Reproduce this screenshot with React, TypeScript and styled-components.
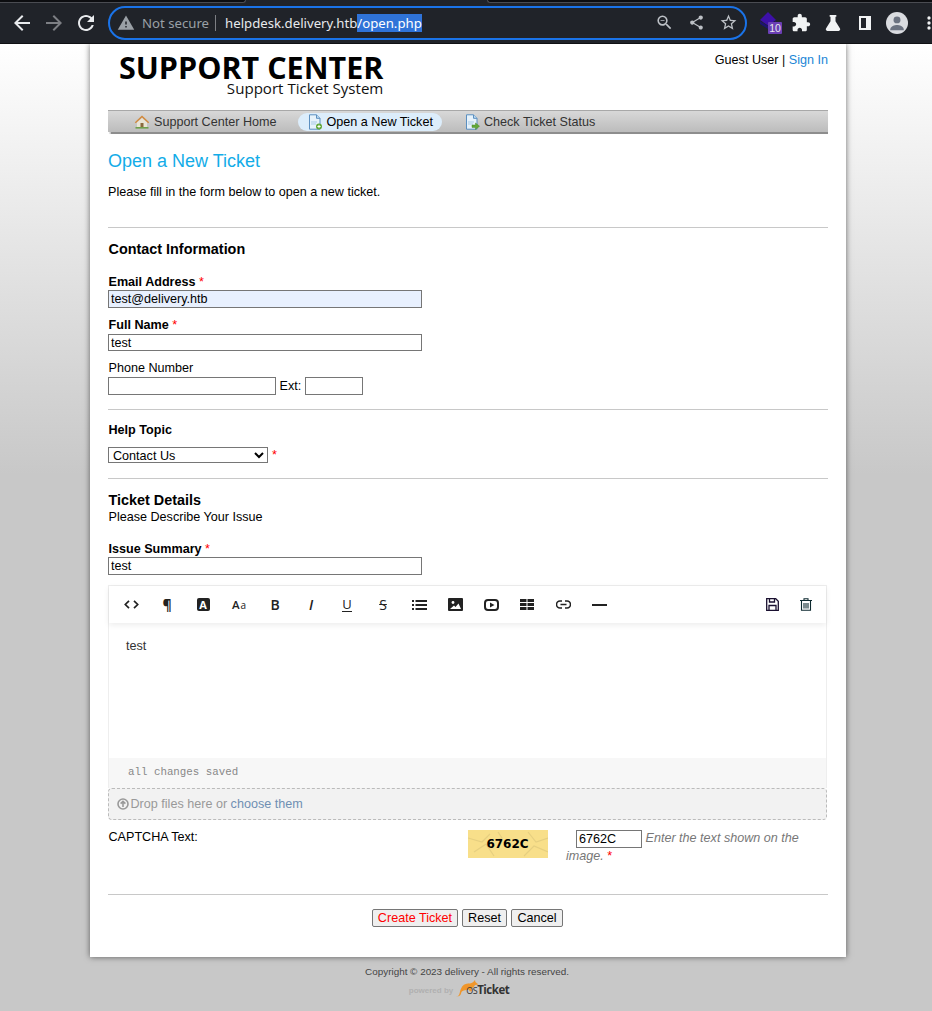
import React from 'react';
import styled, { createGlobalStyle } from 'styled-components';

const GlobalStyle = createGlobalStyle`
    html, body {
        margin: 0;
        padding: 0;
        height: 100%;
        overflow: hidden;
        background: #c8c8c8;
    }
    body {
        font-family: "Liberation Sans", Arial, sans-serif;
        font-size: 12.6px;
        color: #000;
    }
`;

const ChromeIcon = ({ d, size = 24, color = '#e8eaed' }: { d: string; size?: number; color?: string }) => (
    <svg width={size} height={size} viewBox="0 0 24 24" fill={color}>
        <path d={d} />
    </svg>
);

const paths = {
    back: 'M20 11H7.83l5.59-5.59L12 4l-8 8 8 8 1.41-1.41L7.83 13H20v-2z',
    forward: 'M12 4l-1.41 1.41L16.17 11H4v2h12.17l-5.58 5.59L12 20l8-8z',
    reload: 'M17.65 6.35C16.2 4.9 14.21 4 12 4c-4.42 0-7.99 3.58-7.99 8s3.57 8 7.99 8c3.73 0 6.84-2.55 7.73-6h-2.08c-.82 2.33-3.04 4-5.65 4-3.31 0-6-2.69-6-6s2.69-6 6-6c1.66 0 3.14.69 4.22 1.78L13 11h7V4l-2.35 2.35z',
    warning: 'M1 21h22L12 2 1 21zm12-3h-2v-2h2v2zm0-4h-2v-4h2v4z',
    zoomOut: 'M15.5 14h-.79l-.28-.27A6.47 6.47 0 0 0 16 9.5 6.5 6.5 0 1 0 9.5 16c1.61 0 3.09-.59 4.23-1.57l.27.28v.79l5 4.99L20.49 19l-4.99-5zm-6 0C7.01 14 5 11.99 5 9.5S7.01 5 9.5 5 14 7.01 14 9.5 11.99 14 9.5 14zM7 9h5v1H7z',
    share: 'M18 16.08c-.76 0-1.44.3-1.96.77L8.91 12.7c.05-.23.09-.46.09-.7s-.04-.47-.09-.7l7.05-4.11c.54.5 1.25.81 2.04.81 1.66 0 3-1.34 3-3s-1.34-3-3-3-3 1.34-3 3c0 .24.04.47.09.7L8.04 9.81C7.5 9.31 6.79 9 6 9c-1.66 0-3 1.34-3 3s1.34 3 3 3c.79 0 1.5-.31 2.04-.81l7.12 4.16c-.05.21-.08.43-.08.65 0 1.61 1.31 2.92 2.92 2.92 1.61 0 2.92-1.31 2.92-2.92s-1.31-2.92-2.92-2.92z',
    star: 'M22 9.24l-7.19-.62L12 2 9.19 8.63 2 9.24l5.46 4.73L5.82 21 12 17.27 18.18 21l-1.63-7.03L22 9.24zM12 15.4l-3.76 2.27 1-4.28-3.32-2.88 4.38-.38L12 6.1l1.71 4.04 4.38.38-3.32 2.88 1 4.28L12 15.4z',
    puzzle: 'M20.5 11H19V7c0-1.1-.9-2-2-2h-4V3.5C13 2.12 11.88 1 10.5 1S8 2.12 8 3.5V5H4c-1.1 0-1.99.9-1.99 2v3.8H3.5c1.49 0 2.7 1.21 2.7 2.7s-1.21 2.7-2.7 2.7H2V20c0 1.1.9 2 2 2h3.8v-1.5c0-1.49 1.21-2.7 2.7-2.7 1.49 0 2.7 1.21 2.7 2.7V22H17c1.1 0 2-.9 2-2v-4h1.5c1.38 0 2.5-1.12 2.5-2.5S21.88 11 20.5 11z',
    flask: 'M8 2.500h8v2h-1v5.300l5.400 8.900c.7 1.200-.1 2.800-1.500 2.800H5.100c-1.400 0-2.200-1.600-1.500-2.800L9 9.800V4.500H8z',
    more: 'M12 8a2 2 0 1 0 0-4 2 2 0 0 0 0 4zm0 2a2 2 0 1 0 0 4 2 2 0 0 0 0-4zm0 6a2 2 0 1 0 0 4 2 2 0 0 0 0-4z',
};

const HomeIcon = () => (
    <svg width="16" height="16" viewBox="0 0 16 16">
        <path d="M8 1.5 .8 8.2l1 1L8 3.6l6.2 5.6 1-1z" fill="#d2893c" />
        <path d="M3 8.6 8 4.2l5 4.4V13H3z" fill="#e9e4d4" />
        <rect x="6.5" y="9" width="3" height="4" fill="#8a6a3c" />
        <path d="M1.5 13h13v1.6h-13z" fill="#6ea04a" />
    </svg>
);

const DocIcon = ({ arrow }: { arrow?: boolean }) => (
    <svg width="16" height="16" viewBox="0 0 16 16">
        <path d="M2.5 .8h7l3.5 3.5v10.9h-10.5z" fill="#e6f2fb" stroke="#5b8fc0" />
        <path d="M9.5 .8v3.5h3.5" fill="#bcd9f0" stroke="#5b8fc0" />
        <path d="M4 8h6M4 10h5" stroke="#a9cbe6" />
        {arrow ? (
            <path d="M8 11h3.5V9l4 3.2-4 3.2v-2H8z" fill="#62a838" stroke="#4a8a28" strokeWidth=".5" />
        ) : (
            <>
                <circle cx="12" cy="12.5" r="3" fill="#62a838" />
                <path d="M10.4 12.5h3.2M12 10.9v3.2" stroke="#fff" />
            </>
        )}
    </svg>
);

export default function App() {
    return (
        <>
            <GlobalStyle />
            <BrowserBar>
                <TabStrip>
                    <TabEdgeLeft />
                    <TabEdgeRight />
                </TabStrip>
                <BarRow>
                    <NavButtons>
                        <ChromeButton><ChromeIcon d={paths.back} /></ChromeButton>
                        <ChromeButton><ChromeIcon d={paths.forward} color="#7d7f84" /></ChromeButton>
                        <ChromeButton><ChromeIcon d={paths.reload} /></ChromeButton>
                    </NavButtons>
                    <Omnibox>
                        <ChromeIcon d={paths.warning} size={18} color="#9aa0a6" />
                        <NotSecure>Not secure</NotSecure>
                        <UrlDivider />
                        <Url>helpdesk.delivery.htb<Selected>/open.php</Selected></Url>
                        <OmniActions>
                            <ActionSlot><ChromeIcon d={paths.zoomOut} size={19} color="#bdc1c6" /></ActionSlot>
                            <ActionSlot><ChromeIcon d={paths.share} size={17} color="#bdc1c6" /></ActionSlot>
                            <ActionSlot><ChromeIcon d={paths.star} size={19} color="#bdc1c6" /></ActionSlot>
                        </OmniActions>
                    </Omnibox>
                    <Extensions>
                        <ActionSlot>
                            <ExtensionIcon>
                                <svg width="17" height="17" viewBox="0 0 17 17">
                                    <path d="M0 9l8 5 8-5v3l-8 5-8-5z" fill="#1d1470" />
                                    <path d="M8 0l8 8-8 5.500L0 8z" fill="#3d10a8" />
                                </svg>
                                <Badge>10</Badge>
                            </ExtensionIcon>
                        </ActionSlot>
                        <ActionSlot><ChromeIcon d={paths.puzzle} size={20} color="#f1f3f4" /></ActionSlot>
                        <ActionSlot><ChromeIcon d={paths.flask} size={20} color="#f1f3f4" /></ActionSlot>
                        <ActionSlot><SidePanel /></ActionSlot>
                        <ActionSlot>
                            <Avatar>
                                <svg width="22" height="22" viewBox="0 0 24 24" fill="#6b7280">
                                    <circle cx="12" cy="8.6" r="3.8" />
                                    <path d="M4.6 19.2c0-3.6 4.9-5 7.4-5s7.4 1.4 7.4 5v.8H4.6z" />
                                </svg>
                            </Avatar>
                        </ActionSlot>
                        <ActionSlot><ChromeIcon d={paths.more} size={20} color="#f1f3f4" /></ActionSlot>
                    </Extensions>
                </BarRow>
            </BrowserBar>

            <Page>
                <Card>
                    <Header>
                        <Logo>
                            <LogoTitle>SUPPORT CENTER</LogoTitle>
                            <LogoSub>Support Ticket System</LogoSub>
                        </Logo>
                        <UserInfo>Guest User | <Link>Sign In</Link></UserInfo>
                    </Header>

                    <Nav>
                        <NavItem $left={26}><HomeIcon />Support Center Home</NavItem>
                        <NavItem $left={21} $active><DocIcon />Open a New Ticket</NavItem>
                        <NavItem $left={22}><DocIcon arrow />Check Ticket Status</NavItem>
                    </Nav>

                    <Title>Open a New Ticket</Title>
                    <Intro>Please fill in the form below to open a new ticket.</Intro>

                    <Divider $top={27} />
                    <SectionTitle>Contact Information</SectionTitle>

                    <FieldLabel $top={17} $bold>Email Address <Req>*</Req></FieldLabel>
                    <TextInput $width={314} $autofill readOnly value="test@delivery.htb" />
                    <FieldLabel $top={9} $bold>Full Name <Req>*</Req></FieldLabel>
                    <TextInput $width={314} $top={1} $height={17} readOnly value="test" />
                    <FieldLabel $top={9}>Phone Number</FieldLabel>
                    <PhoneRow>
                        <TextInput $width={168} readOnly value="" />
                        Ext:
                        <TextInput $width={58} readOnly value="" />
                    </PhoneRow>

                    <Divider $top={14} />
                    <FieldLabel $top={12} $bold>Help Topic</FieldLabel>
                    <TopicRow>
                        <TopicSelect defaultValue="Contact Us">
                            <option>Contact Us</option>
                        </TopicSelect>
                        <Req>*</Req>
                    </TopicRow>

                    <Divider $top={15} />
                    <SectionTitle>Ticket Details</SectionTitle>
                    <FieldLabel $top={1}>Please Describe Your Issue</FieldLabel>
                    <FieldLabel $top={16} $bold>Issue Summary <Req>*</Req></FieldLabel>
                    <TextInput $width={314} readOnly value="test" />

                    <Editor>
                        <EditorToolbar>
                            <ToolGroup>
                                <Tool>
                                    <svg width="15" height="9" viewBox="0 0 15 9" fill="none" stroke="#222" strokeWidth="1.700">
                                        <path d="M5 .8 1.300 4.500 5 8.200M10 .8l3.700 3.700L10 8.200" />
                                    </svg>
                                </Tool>
                                <Tool><Glyph $size={14}>¶</Glyph></Tool>
                                <Tool><LetterBox>A</LetterBox></Tool>
                                <Tool><SizeGlyph>A<small>a</small></SizeGlyph></Tool>
                                <Tool><Glyph $size={14} $weight={600}>B</Glyph></Tool>
                                <Tool><Glyph $size={14} $italic $weight={600}>I</Glyph></Tool>
                                <Tool><UnderGlyph>U</UnderGlyph></Tool>
                                <Tool><StrikeGlyph>S</StrikeGlyph></Tool>
                                <Tool>
                                    <svg width="15" height="10" viewBox="0 0 15 10" fill="#222">
                                        <path d="M0 0h2v2H0zM3.500 0H15v2H3.500zM0 4h2v2H0zM3.500 4H15v2H3.500zM0 8h2v2H0zM3.500 8H15v2H3.500z" />
                                    </svg>
                                </Tool>
                                <Tool>
                                    <svg width="15" height="13" viewBox="0 0 15 13">
                                        <rect width="15" height="13" rx="1" fill="#222" />
                                        <circle cx="5" cy="4.500" r="1.400" fill="#fff" />
                                        <path d="M2 11 6 7.500l1.500 1.500L10.500 5.500 13 11z" fill="#fff" />
                                    </svg>
                                </Tool>
                                <Tool>
                                    <svg width="15" height="12" viewBox="0 0 15 12" fill="none">
                                        <rect x="1" y="1" width="13" height="10" rx="3" stroke="#222" strokeWidth="2" />
                                        <path d="M6 3.500v5L10.500 6z" fill="#222" />
                                    </svg>
                                </Tool>
                                <Tool>
                                    <svg width="14" height="11" viewBox="0 0 14 11" fill="#222">
                                        <path d="M0 0h6.500v3H0zM7.500 0H14v3H7.500zM0 4h6.500v3H0zM7.500 4H14v3H7.500zM0 8h6.500v3H0zM7.500 8H14v3H7.500z" />
                                    </svg>
                                </Tool>
                                <Tool>
                                    <svg width="15" height="9" viewBox="0 0 15 9" fill="none" stroke="#222" strokeWidth="1.600">
                                        <path d="M6 1H4a3.500 3.500 0 0 0 0 7h2M9 1h2a3.500 3.500 0 0 1 0 7H9M4.500 4.500h6" />
                                    </svg>
                                </Tool>
                                <Tool>
                                    <svg width="15" height="2" viewBox="0 0 15 2"><path d="M0 0h15v2H0z" fill="#222" /></svg>
                                </Tool>
                            </ToolGroup>
                            <ToolActions>
                                <svg width="13" height="13" viewBox="0 0 13 13" fill="none" stroke="#1a1030" strokeWidth="1.300">
                                    <path d="M.7.700h9l2.600 2.600v9H.7z" />
                                    <path d="M3.500 1v3h5V1M3 12V7.500h7V12" />
                                </svg>
                                <svg width="12" height="13" viewBox="0 0 12 13" fill="none" stroke="#0e2a30" strokeWidth="1.100">
                                    <path d="M0 2.500h12M4 2.500V.7h4v1.800M1.500 2.500v9.800h9V2.500M4 5v5.500M6 5v5.500M8 5v5.500" />
                                </svg>
                            </ToolActions>
                        </EditorToolbar>
                        <EditorBody>test</EditorBody>
                        <SaveStatus>all changes saved</SaveStatus>
                    </Editor>
                    <DropZone>
                        <svg width="12" height="12" viewBox="0 0 12 12" fill="none" stroke="#999" strokeWidth="1.600">
                            <circle cx="6" cy="6" r="5" />
                            <path d="M6 9V3.600M3.600 5.600 6 3.400l2.400 2.200" />
                        </svg>
                        <span>Drop files here or <DropLink>choose them</DropLink></span>
                    </DropZone>

                    <CaptchaRow>
                        <CaptchaLabel>CAPTCHA Text:</CaptchaLabel>
                        <CaptchaImage>
                            <CaptchaCracks viewBox="0 0 80 28" fill="none" stroke="#e6cf80" strokeWidth="1.200">
                                <path d="M0 8l14 4 8-8M6 22l12-8 8 12M60 2l8 10 12-4M56 26l10-10 14 6M30 2l4 6-6 2" />
                            </CaptchaCracks>
                            <CaptchaCode>6762C</CaptchaCode>
                        </CaptchaImage>
                        <CaptchaHint>
                            <TextInput $width={66} $inline readOnly value="6762C" /> <em>Enter the text shown on the image.</em> <Req>*</Req>
                        </CaptchaHint>
                    </CaptchaRow>

                    <Divider $top={29} />
                    <Buttons>
                        <FormButton $primary>Create Ticket</FormButton>
                        <FormButton>Reset</FormButton>
                        <FormButton>Cancel</FormButton>
                    </Buttons>
                </Card>

                <Footer>
                    <Copyright>Copyright © 2023 delivery - All rights reserved.</Copyright>
                    <Powered>
                        <PoweredBy>powered by</PoweredBy>
                        <svg width="23" height="17" viewBox="0 0 23 17" fill="#f0962a">
                            <path d="M0 16.500c2.500 0 3.200-1.500 3.800-4C4.800 8.500 6.500 4.500 10.500 3.800c2.500-.4 4.500-.3 6.500-1.600L19 0l.4 2 3.100 2.600-3.500.4c-1 1.800-2.200 3-3.800 3.800l.8 2.200-2.200.6-1-2.200-4 .8c-1.500.3-3 .9-3.500 2.200C5.300 14.800 3 16.800 0 16.500z" />
                        </svg>
                        <PoweredName><small>OS</small>Ticket</PoweredName>
                    </Powered>
                </Footer>
            </Page>
        </>
    );
}

const BrowserBar = styled.header`
    height: 44px;
    background: #202329;
    border-bottom: 1px solid #101114;
    box-sizing: border-box;
`;

const TabStrip = styled.div`
    display: flex;
    justify-content: space-between;
    height: 3px;
`;

const TabEdgeLeft = styled.div`
    width: 245px;
    background: #0c0d10;
    border-bottom: 1px solid #4a4c52;
    border-right: 1px solid #4a4c52;
    border-bottom-right-radius: 3px;
`;

const TabEdgeRight = styled.div`
    width: 444px;
    background: #0c0d10;
    border-bottom: 1px solid #4a4c52;
    border-left: 1px solid #4a4c52;
    border-bottom-left-radius: 3px;
`;

const BarRow = styled.div`
    display: flex;
    align-items: center;
    height: 40px;
    padding-bottom: 1px;
    box-sizing: border-box;
`;

const NavButtons = styled.div`
    display: flex;
    flex: none;
    width: 108px;
    padding-left: 6px;
    box-sizing: border-box;
`;

const ChromeButton = styled.span`
    display: flex;
    justify-content: center;
    width: 32px;
`;

const Omnibox = styled.div`
    display: flex;
    flex: none;
    align-items: center;
    width: 639px;
    height: 34px;
    padding: 0 0 0 7px;
    box-sizing: border-box;
    border: 2px solid #1a73e8;
    border-radius: 17px;
    background: #202329;
`;

const NotSecure = styled.span`
    margin-left: 7px;
    font: 13.200px "Noto Sans", "Open Sans", sans-serif;
    color: #9aa0a6;
`;

const UrlDivider = styled.span`
    width: 1px;
    height: 16px;
    margin: 0 9px 0 6px;
    background: #7d7f84;
`;

const Url = styled.span`
    font: 13.200px "Noto Sans", "Open Sans", sans-serif;
    color: #e8eaed;
`;

const Selected = styled.span`
    background: #2f73d8;
    color: #fff;
`;

const OmniActions = styled.div`
    display: flex;
    align-items: center;
    margin-left: auto;
    padding-right: 1px;
`;

const ActionSlot = styled.span`
    display: flex;
    align-items: center;
    justify-content: center;
    width: 32px;
    height: 24px;
    flex: none;
`;

const Extensions = styled.div`
    display: flex;
    flex: none;
    align-items: center;
    margin-left: 6px;
`;

const ExtensionIcon = styled.div`
    position: relative;
    width: 17px;
    height: 17px;
    margin-top: -4px;
    margin-left: -1px;
`;

const Badge = styled.span`
    position: absolute;
    left: 8px;
    top: 10px;
    width: 14px;
    height: 12px;
    border-radius: 1px;
    background: #6b3fb5;
    color: #e8eaed;
    font-size: 10.500px;
    line-height: 13px;
    text-align: center;
`;

const SidePanel = styled.div`
    width: 5px;
    height: 10px;
    border: 2px solid #f1f3f4;
    border-right-width: 5px;
`;

const Avatar = styled.div`
    display: flex;
    align-items: center;
    justify-content: center;
    width: 22px;
    height: 22px;
    border-radius: 50%;
    background: #dadce0;
    overflow: hidden;
`;

const Page = styled.main`
    height: 967px;
    background: linear-gradient(#fff 0, #c8c8c8 430px);
    overflow: hidden;
`;

const Card = styled.div`
    width: 756px;
    height: 913px;
    margin-left: 90px;
    padding: 0 18px;
    box-sizing: border-box;
    background: #fff;
    box-shadow: 0 0 6px rgba(0, 0, 0, 0.55);
`;

const Header = styled.div`
    display: flex;
    justify-content: space-between;
    height: 66px;
`;

const Logo = styled.div`
    display: flex;
    flex-direction: column;
    align-items: flex-end;
    padding: 8px 0 0 11px;
    color: #000;
    font-family: "Open Sans", sans-serif;
`;

const LogoTitle = styled.div`
    font-size: 30.500px;
    font-weight: 700;
    line-height: 30px;
`;

const LogoSub = styled.div`
    font-size: 15.100px;
    line-height: 12px;
    color: #111;
`;

const UserInfo = styled.div`
    padding-top: 9px;
    line-height: 15px;
`;

const Link = styled.a`
    color: #1b86d6;
`;

const Nav = styled.nav`
    display: flex;
    align-items: center;
    height: 22px;
    box-sizing: border-box;
    border-top: 1px solid #a8a8a8;
    background: linear-gradient(#d8d8d8, #bcbcbc);
    box-shadow: 0 2px 1px -0.500px #8d8d8d;
`;

const NavItem = styled.span<{ $left: number; $active?: boolean }>`
    display: flex;
    align-items: center;
    gap: 4px;
    height: 18px;
    margin-left: ${p => p.$left}px;
    padding: ${p => (p.$active ? '0 9px' : '0')};
    border-radius: 9px;
    background: ${p => (p.$active ? '#dcedfb' : 'transparent')};
    color: ${p => (p.$active ? '#000' : '#333')};
    line-height: 18px;
`;

const Title = styled.h1`
    margin: 19px 0 0;
    font-size: 18px;
    font-weight: 400;
    line-height: 21px;
    color: #12ace8;
`;

const Intro = styled.p`
    margin: 13px 0 0;
    line-height: 15px;
`;

const Divider = styled.hr<{ $top: number }>`
    margin: ${p => p.$top}px 0 0;
    border: 0;
    height: 1px;
    background: #c8c8c8;
`;

const SectionTitle = styled.h3`
    margin: 13px 0 0 0.500px;
    font-size: 14.400px;
    font-weight: 700;
    line-height: 16px;
`;

const FieldLabel = styled.div<{ $top: number; $bold?: boolean }>`
    margin: ${p => p.$top}px 0 0 0.500px;
    font-weight: ${p => (p.$bold ? 700 : 400)};
    line-height: 16px;
`;

const Req = styled.span`
    color: #f00;
    font-weight: 400;
`;

const TextInput = styled.input<{ $width: number; $height?: number; $top?: number; $autofill?: boolean; $inline?: boolean }>`
    display: ${p => (p.$inline ? 'inline-block' : 'block')};
    width: ${p => p.$width}px;
    height: ${p => p.$height ?? 18}px;
    margin: ${p => p.$top ?? 0}px 0 0;
    padding: 0 2px;
    box-sizing: border-box;
    border: 1px solid #767676;
    background: ${p => (p.$autofill ? '#e8f0fe' : '#fff')};
    color: #000;
    font: 12.600px "Liberation Sans", Arial, sans-serif;
    outline: none;
`;

const PhoneRow = styled.div`
    display: flex;
    align-items: center;
    gap: 3.500px;
    margin-top: 1px;
`;

const TopicRow = styled.div`
    display: flex;
    align-items: center;
    gap: 4px;
    margin-top: 9px;
`;

const TopicSelect = styled.select`
    width: 160px;
    height: 16px;
    padding: 0 0 1px;
    border: 1px solid #767676;
    border-radius: 0;
    background: #fff;
    font: 12.600px "Liberation Sans", Arial, sans-serif;
    color: #000;
`;

const Editor = styled.div`
    margin-top: 10px;
    width: 719px;
    border: solid #eee;
    border-width: 1px 1px 0;
    box-sizing: border-box;
`;

const EditorToolbar = styled.div`
    display: flex;
    justify-content: space-between;
    height: 37px;
    padding: 0 0 0 4px;
    box-shadow: 0 2px 6px rgba(0, 0, 0, 0.08);
`;

const ToolGroup = styled.div`
    display: flex;
`;

const Tool = styled.span`
    display: flex;
    align-items: center;
    justify-content: center;
    width: 36px;
    color: #222;
`;

const Glyph = styled.span<{ $size: number; $italic?: boolean; $weight?: number }>`
    font-size: ${p => p.$size}px;
    font-style: ${p => (p.$italic ? 'italic' : 'normal')};
    font-weight: ${p => p.$weight ?? 700};
    font-family: "Open Sans", sans-serif;
    line-height: 14px;
`;

const LetterBox = styled.span`
    width: 13px;
    height: 13px;
    border-radius: 2px;
    background: #222;
    color: #fff;
    font: 700 11px/13px "Open Sans", sans-serif;
    text-align: center;
`;

const SizeGlyph = styled.span`
    font: 600 11.500px "Open Sans", sans-serif;
    small {
        font-size: 10px;
        font-weight: 400;
        margin-left: 1px;
    }
`;

const UnderGlyph = styled.span`
    font: 400 13px/13px "Open Sans", sans-serif;
    border-bottom: 1px solid #222;
`;

const StrikeGlyph = styled.span`
    font: 400 14px/14px "Open Sans", sans-serif;
    text-decoration: line-through;
`;

const ToolActions = styled.div`
    display: flex;
    align-items: center;
    gap: 21px;
    padding-right: 14px;
`;

const EditorBody = styled.div`
    height: 135px;
    padding: 16px 17px 0;
    box-sizing: border-box;
    color: #333;
    line-height: 15px;
`;

const SaveStatus = styled.div`
    height: 30px;
    padding: 8px 0 0 19px;
    box-sizing: border-box;
    background: #f7f7f7;
    color: #888;
    font: 10.800px "Liberation Mono", monospace;
`;

const DropZone = styled.div`
    display: flex;
    align-items: center;
    gap: 2px;
    width: 719px;
    height: 32px;
    padding: 0 0 1px 7.500px;
    box-sizing: border-box;
    border: 1px dashed #bbb;
    border-radius: 4px;
    background: #f2f2f2;
    color: #999;
`;

const DropLink = styled.a`
    color: #6f8fb3;
`;

const CaptchaRow = styled.div`
    display: flex;
    margin-top: 10px;
`;

const CaptchaLabel = styled.div`
    width: 359.500px;
    margin-left: 0.500px;
    line-height: 15px;
`;

const CaptchaImage = styled.div`
    position: relative;
    width: 80px;
    height: 28px;
    background: #f8df8a;
    display: flex;
    align-items: center;
    justify-content: center;
`;

const CaptchaCracks = styled.svg`
    position: absolute;
    inset: 0;
`;

const CaptchaCode = styled.span`
    position: relative;
    padding: 0 1px 0 0;
    font: 700 12px "DejaVu Sans", sans-serif;
    color: #000;
`;

const CaptchaHint = styled.div`
    width: 262px;
    margin-left: 18px;
    text-indent: 10px;
    line-height: 17px;
    color: #777;
    input {
        text-indent: 0;
        vertical-align: top;
    }
`;

const Buttons = styled.div`
    display: flex;
    justify-content: center;
    gap: 3.500px;
    margin-top: 14px;
    padding-right: 1px;
`;

const FormButton = styled.button<{ $primary?: boolean }>`
    height: 18px;
    padding: 0 ${p => (p.$primary ? 5 : 5.5)}px;
    border: 1px solid #767676;
    border-radius: 2px;
    background: #efefef;
    color: ${p => (p.$primary ? '#f00' : '#000')};
    font: 12.600px "Liberation Sans", Arial, sans-serif;
`;

const Footer = styled.footer`
    display: flex;
    flex-direction: column;
    align-items: center;
    padding-top: 9px;
    margin-left: 2px;
`;

const Copyright = styled.div`
    font-size: 9.900px;
    line-height: 12px;
    color: #444;
`;

const Powered = styled.div`
    display: flex;
    align-items: flex-end;
    height: 19px;
    margin-left: -16px;
`;

const PoweredBy = styled.span`
    font-size: 8px;
    font-weight: 700;
    line-height: 12px;
    color: #b0b0b0;
    margin-right: 3px;
`;

const PoweredName = styled.span`
    font: 700 11.500px/12px "Open Sans", sans-serif;
    letter-spacing: -0.500px;
    color: #333;
    margin-left: -13px;
    small {
        font-size: 9px;
        font-weight: 400;
    }
`;
